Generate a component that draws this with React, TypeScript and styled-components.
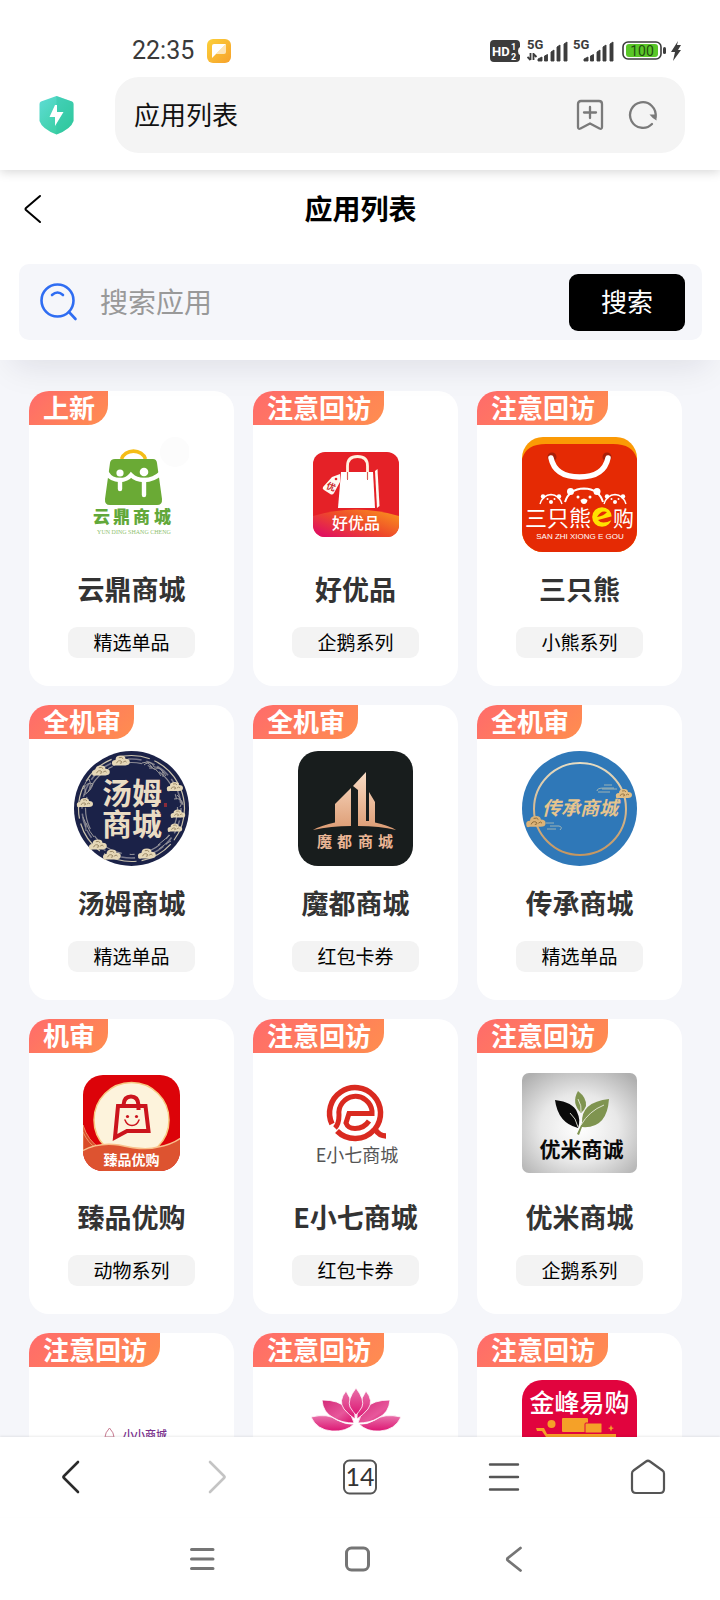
import React from "react";
import styled, { createGlobalStyle } from "styled-components";

const cjk = '"Noto Sans CJK SC", "Noto Sans", sans-serif';

const GlobalStyle = createGlobalStyle`
  *, *::before, *::after { box-sizing: border-box; }
  body { margin: 0; background: #fff; font-family: ${cjk}; color: #000; }
  button, input { font: inherit; color: inherit; margin: 0; }
  svg { display: block; flex: none; }
  svg text { font-family: ${cjk}; }
`;

const Screen = styled.div`
  display: flex;
  flex-direction: column;
  height: 100vh;
  overflow: hidden;
`;

/* ---------- phone status bar ---------- */

const StatusBar = styled.div`
  position: relative;
  z-index: 3;
  display: flex;
  align-items: center;
  justify-content: space-between;
  flex: none;
  height: 77px;
  padding: 24px 38px 0 132px;
  background: #fff;
`;

const StatusGroup = styled.div<{ $gap: number }>`
  display: flex;
  align-items: center;
  gap: ${(p) => p.$gap}px;
`;

const Clock = styled.time`
  font-family: Roboto, sans-serif;
  font-size: 25px;
  line-height: 32px;
  color: #3a3a3a;
`;

/* ---------- browser bar ---------- */

const BrowserBar = styled.header`
  position: relative;
  z-index: 2;
  display: flex;
  align-items: center;
  flex: none;
  gap: 40px;
  padding: 0 35px 17px 38px;
  background: #fff;
  box-shadow: 0 2px 10px rgba(0, 0, 0, 0.16);
`;

const AddressPill = styled.div`
  display: flex;
  align-items: center;
  flex: 1;
  gap: 21px;
  height: 76px;
  padding: 0 26px 0 19px;
  border-radius: 24px;
  background: #f4f4f4;
`;

const AddressInput = styled.input`
  flex: 1;
  min-width: 0;
  padding: 0 0 2px;
  border: 0;
  outline: 0;
  background: transparent;
  font-size: 26px;
  line-height: 40px;
  color: #111;
`;

const IconButton = styled.button`
  display: flex;
  align-items: center;
  justify-content: center;
  padding: 0;
  border: 0;
  background: transparent;
`;

/* ---------- page header ---------- */

const PageHeader = styled.section`
  position: relative;
  z-index: 1;
  flex: none;
  padding: 0 18px 20px 19px;
  background: #fff;
  box-shadow: 0 18px 32px -12px rgba(20, 20, 50, 0.1);
`;

const TitleRow = styled.div`
  display: grid;
  grid-template-columns: 27px 1fr 27px;
  align-items: center;
  height: 78px;
  margin-bottom: 16px;
`;

const Title = styled.h1`
  margin: 0;
  padding-bottom: 2px;
  font-size: 28px;
  line-height: 40px;
  font-weight: 600;
  text-align: center;
`;

const SearchBox = styled.form`
  display: flex;
  align-items: center;
  gap: 21px;
  height: 76px;
  padding: 0 17px 0 20px;
  border-radius: 10px;
  background: #f5f6fa;
`;

const SearchInput = styled.input`
  flex: 1;
  min-width: 0;
  padding: 0 0 2px;
  border: 0;
  outline: 0;
  background: transparent;
  font-size: 28px;
  line-height: 40px;

  &::placeholder {
    color: #999;
    opacity: 1;
  }
`;

const SearchButton = styled.button`
  width: 116px;
  height: 57px;
  padding: 0 0 2px;
  border: 0;
  border-radius: 9px;
  background: #000;
  color: #fff;
  font-size: 26px;
  line-height: 40px;
`;

/* ---------- app grid ---------- */

const Content = styled.main`
  flex: 1;
  min-height: 0;
  overflow: hidden;
  padding: 31px 38px 0 29px;
  background: #f5f6fa;
`;

const Grid = styled.div`
  display: grid;
  grid-template-columns: repeat(3, minmax(0, 1fr));
  gap: 19px;
`;

const Card = styled.a`
  position: relative;
  display: flex;
  flex-direction: column;
  align-items: center;
  padding: 46px 0 28px;
  border-radius: 20px;
  background: #fff;
  color: inherit;
  text-decoration: none;
`;

const Ribbon = styled.span`
  position: absolute;
  top: 0;
  left: 0;
  padding: 0 13px 2px 14px;
  border-radius: 20px 0 20px 0;
  background: linear-gradient(135deg, #ff6b6b, #ff8e4f);
  color: #fff;
  font-size: 26px;
  line-height: 32px;
  font-weight: 700;
  white-space: nowrap;
`;

const AppName = styled.h2`
  margin: 17px 0 18px;
  color: #333;
  font-size: 27px;
  line-height: 40px;
  font-weight: 700;
  white-space: nowrap;
`;

const Series = styled.span`
  width: 127px;
  padding-bottom: 2px;
  border-radius: 9px;
  background: #f3f3f3;
  font-size: 19px;
  line-height: 29px;
  text-align: center;
`;

/* ---------- bottom bars ---------- */

const BrowserNav = styled.nav`
  position: relative;
  display: grid;
  grid-template-columns: repeat(5, 1fr);
  flex: none;
  height: 80px;
  background: #fff;
  box-shadow: 0 -1px 2px rgba(0, 0, 0, 0.08);
`;

const SystemNav = styled.nav`
  display: flex;
  align-items: center;
  justify-content: center;
  flex: none;
  gap: 128px;
  height: 83px;
  padding-right: 4px;
  background: #fff;
`;

/* ---------- status icons ---------- */

const NotesIcon = () => (
  <svg width="24" height="24" viewBox="0 0 24 24" aria-hidden="true">
    <defs>
      <linearGradient id="notes" x1="0" y1="0" x2="1" y2="1">
        <stop offset="0" stopColor="#fbd03a" />
        <stop offset="1" stopColor="#f7a12b" />
      </linearGradient>
    </defs>
    <rect width="24" height="24" rx="6" fill="url(#notes)" />
    <path d="M5 7Q5 5 7 5H19L5 19Z" fill="#fff" />
    <path d="M19 5V13Q19 15 17 15H9Z" fill="#fff" opacity=".65" />
  </svg>
);

const HdIcon = () => (
  <svg width="33" height="24" viewBox="0 0 33 24" aria-hidden="true">
    <path
      d="M4 1H26Q30 1 30 5V8Q28 9 28 12Q28 15 30 16V19Q30 23 26 23H4Q0 23 0 19V5Q0 1 4 1Z"
      fill="#3c3c3c"
    />
    <text x="2" y="17" fontSize="13" fontWeight="700" fill="#fff" style={{ fontFamily: "Roboto" }}>HD</text>
    <text x="21" y="11" fontSize="9" fontWeight="700" fill="#fff" style={{ fontFamily: "Roboto" }}>1</text>
    <text x="21" y="21" fontSize="9" fontWeight="700" fill="#fff" style={{ fontFamily: "Roboto" }}>2</text>
  </svg>
);

const SignalIcon = ({ arrows }: { arrows?: boolean }) => (
  <svg width="42" height="24" viewBox="0 0 42 24" aria-hidden="true">
    <text x="0" y="10" fontSize="13" fontWeight="700" fill="#3c3c3c" style={{ fontFamily: "Roboto" }}>5G</text>
    {arrows && (
      <path d="M3.500 14v7M.5 18l3 3M6.500 21v-7M6.500 15l3 3" stroke="#3c3c3c" strokeWidth="1.800" fill="none" />
    )}
    <path
      d="M11 20l4-2v4h-4zM17.500 17l3-1.500v6.500h-3zM24 13l3-2v11h-3zM30 8l3-2v16h-3zM37 5l3-2v19h-3z"
      fill="#3c3c3c"
      stroke="#3c3c3c"
      strokeWidth=".9"
      strokeLinejoin="round"
    />
  </svg>
);

const BatteryIcon = () => (
  <svg width="47" height="24" viewBox="-3 0 47 24" aria-hidden="true">
    <rect x="1" y="3" width="38" height="17" rx="5" fill="#fff" stroke="#3c3c3c" strokeWidth="1.600" />
    <rect x="4" y="5" width="32" height="13" rx="3" fill="#5ac728" />
    <rect x="41" y="8" width="3" height="7" rx="1.500" fill="#3c3c3c" />
    <text x="20" y="17" fontSize="14" fontWeight="400" textAnchor="middle" fill="#234d12" style={{ fontFamily: "Roboto" }}>100</text>
  </svg>
);

const ChargeIcon = () => (
  <svg width="12" height="24" viewBox="0 0 12 24" aria-hidden="true">
    <path d="M8 2L1 13h4l-2 9 8-11H8l3-5H7z" fill="#3c3c3c" />
  </svg>
);

/* ---------- toolbar icons ---------- */

const ShieldIcon = () => (
  <svg width="37" height="40" viewBox="0 0 37 40" aria-hidden="true">
    <defs>
      <linearGradient id="shield" x1="0" y1="0" x2="1" y2="1">
        <stop offset="0" stopColor="#5fdcd6" />
        <stop offset="1" stopColor="#2fcb93" />
      </linearGradient>
    </defs>
    <path d="M18.500 1L34 6.500Q35.500 7 35.500 9V26Q33 34 18.500 39.500Q4 34 1.500 26V9Q1.500 7 3 6.500Z" fill="url(#shield)" />
    <path d="M18.500 1L34 6.500Q35.500 7 35.500 9V26Q33 34 18.500 39.500Z" fill="#2cc4a4" opacity=".4" />
    <path d="M17 10L11.500 22H17V31L25.500 17H19V10Z" fill="#fff" />
  </svg>
);

const BookmarkIcon = () => (
  <svg width="32" height="32" viewBox="0 0 32 32" fill="none" stroke="#7a7a7a" strokeWidth="2.300" strokeLinecap="round" strokeLinejoin="round" aria-hidden="true">
    <path d="M7 2H25Q28 2 28 5V28Q28 30.500 25.500 29.500L16 24.500L6.500 29.500Q4 30.500 4 28V5Q4 2 7 2Z" />
    <path d="M16 8v11M10 13.500h12" />
  </svg>
);

const ReloadIcon = () => (
  <svg width="32" height="32" viewBox="0 0 32 32" aria-hidden="true">
    <path d="M25 25A12.800 12.800 0 1 1 28.500 18" fill="none" stroke="#7a7a7a" strokeWidth="2.300" strokeLinecap="round" />
    <path d="M22.500 15.500H29.500V21.500Q26 20 22.500 15.500Z" fill="#7a7a7a" />
  </svg>
);

const ChevronLeft = ({ w, h, color, stroke }: { w: number; h: number; color: string; stroke: number }) => (
  <svg width={w} height={h} viewBox={`0 0 ${w} ${h}`} fill="none" stroke={color} strokeWidth={stroke} strokeLinecap="round" strokeLinejoin="round" aria-hidden="true">
    <path d={`M17 2L3 ${h / 2 - 1}Q2 ${h / 2} 3 ${h / 2 + 1}L17 ${h - 2}`} />
  </svg>
);

const ForwardIcon = () => (
  <svg width="22" height="34" viewBox="0 0 22 34" fill="none" stroke="#c4c4c4" strokeWidth="2.600" strokeLinecap="round" strokeLinejoin="round" aria-hidden="true">
    <path d="M5 2L19 16Q20 17 19 18L5 32" />
  </svg>
);

const SearchIcon = () => (
  <svg width="40" height="40" viewBox="0 0 40 40" fill="none" stroke="#2f6df2" strokeWidth="2.600" strokeLinecap="round" aria-hidden="true">
    <circle cx="18.500" cy="18.500" r="16" />
    <path d="M13 13Q18.500 8 24 13M30 30L36.500 37" />
  </svg>
);

const TabsIcon = () => (
  <svg width="36" height="36" viewBox="0 0 36 36" aria-hidden="true">
    <rect x="2" y="1.500" width="32" height="33" rx="5.500" fill="none" stroke="#555" strokeWidth="2" />
    <text x="18" y="27" fontSize="25" textAnchor="middle" fill="#333" style={{ fontFamily: "Lato" }}>14</text>
  </svg>
);

const MenuIcon = () => (
  <svg width="32" height="32" viewBox="0 0 32 32" stroke="#555" strokeWidth="2.400" strokeLinecap="round" aria-hidden="true">
    <path d="M2 3.500H30M2 16H30M2 28.500H30" />
  </svg>
);

const HomeIcon = () => (
  <svg width="36" height="36" viewBox="0 0 36 36" fill="none" stroke="#555" strokeWidth="2.200" strokeLinejoin="round" aria-hidden="true">
    <path d="M16 2.500Q18 1 20 2.500L32.500 11.500Q34 12.500 34 14.500V30Q34 34 30 34H6Q2 34 2 30V14.500Q2 12.500 3.500 11.500Z" />
  </svg>
);

const RecentsIcon = () => (
  <svg width="28" height="28" viewBox="0 0 28 28" stroke="#757575" strokeWidth="3" strokeLinecap="round" aria-hidden="true">
    <path d="M3.500 4.500H25M3.500 14H25M3.500 23.500H25" />
  </svg>
);

const SystemHomeIcon = () => (
  <svg width="28" height="28" viewBox="0 0 28 28" aria-hidden="true">
    <rect x="2.500" y="3" width="22" height="22" rx="5" fill="none" stroke="#757575" strokeWidth="3" />
  </svg>
);

const SystemBackIcon = () => (
  <svg width="28" height="28" viewBox="0 0 28 28" fill="none" stroke="#757575" strokeWidth="2.800" strokeLinecap="round" strokeLinejoin="round" aria-hidden="true">
    <path d="M20.500 3L8 13Q6.500 14 8 15.500L20.500 25.500" />
  </svg>
);

/* ---------- shop logos, all on a 115 x 115 board ---------- */

const Board = ({ children }: { children: React.ReactNode }) => (
  <svg width="115" height="115" viewBox="0 0 115 115" aria-hidden="true">{children}</svg>
);

const YundingLogo = () => (
  <Board>
    <circle cx="101" cy="15" r="15" fill="#fcfcfc" />
    <path d="M47.500 22A12.500 11 0 0 1 71.500 22" fill="none" stroke="#f5bd17" strokeWidth="3.600" />
    <path d="M41 22H79Q82.500 22 83 26L88 62Q88.500 68 83 68H36Q30.500 68 31 62L36 26Q36.500 22 41 22Z" fill="#6aaa35" />
    <g fill="none" stroke="#fff" strokeWidth="4.400" strokeLinecap="round">
      <path d="M33 36Q37 43 46 43Q53 43 57 38Q62 43 70 43Q80 43 87 36" />
      <path d="M46 43V52M70 43V58" />
    </g>
    <circle cx="46" cy="36" r="3.600" fill="#fff" />
    <circle cx="70" cy="35" r="4.300" fill="#fff" />
    <text x="19 39 59 80" y="86" fontSize="17" fontWeight="900" fill="#62a83a">云鼎商城</text>
    <text x="60" y="97" fontSize="6" textAnchor="middle" fill="#8fbf70" style={{ fontFamily: '"Liberation Serif"' }}>YUN DING SHANG CHENG</text>
  </Board>
);

const HaoyoupinLogo = () => (
  <Board>
    <defs>
      <linearGradient id="hyp" x1="0" y1="0.800" x2="1" y2="0">
        <stop offset="0" stopColor="#e0115f" />
        <stop offset=".45" stopColor="#ee4a2a" />
        <stop offset="1" stopColor="#fb9a1c" />
      </linearGradient>
      <clipPath id="hypClip"><rect x="15" y="15" width="86" height="85" rx="12" /></clipPath>
    </defs>
    <g clipPath="url(#hypClip)">
      <rect x="15" y="15" width="86" height="85" fill="#e52127" />
      <path d="M15 79Q58 66 101 79V100H15Z" fill="url(#hyp)" />
    </g>
    <path d="M43 35H75L77 71H40Z" fill="#fff" />
    <path d="M77 34L79.500 32L81.500 69L79 71Z" fill="#fffaf2" />
    <path d="M49.500 42V29Q49.500 19.500 59.500 19.500Q69.500 19.500 69.500 29V42" fill="none" stroke="#fff3e0" strokeWidth="2.800" />
    <path d="M49.500 35V43M69.500 35V43" stroke="#d9575b" strokeWidth="1" />
    <path d="M42 37L34 40L25 50Q24 52 26 53L33 57.500Q35 58 36 56L42 45Z" fill="#fffaf2" />
    <circle cx="38" cy="42" r="1.300" fill="#e52127" />
    <text x="33" y="53" fontSize="9" fontWeight="700" textAnchor="middle" fill="#c8242b" transform="rotate(20 33 50)">优</text>
    <text x="58" y="92" fontSize="16" fontWeight="500" textAnchor="middle" fill="#fff">好优品</text>
  </Board>
);

const SmallBear = ({ x }: { x: number }) => (
  <g transform={`translate(${x} 62)`}>
    <path d="M-11 5Q-8 -4 0 -4.500Q8 -4 11 5" fill="none" stroke="#fff" strokeWidth="1.400" />
    <circle cx="-8" cy="-2.500" r="2.200" fill="#fff" />
    <circle cx="8" cy="-2.500" r="2.200" fill="#fff" />
    <circle cx="-3.500" cy="0" r="1" fill="#fff" />
    <circle cx="3.500" cy="0" r="1" fill="#fff" />
    <ellipse cx="0" cy="3" rx="2" ry="2" fill="#fff" />
  </g>
);

const ThreeBearsLogo = () => (
  <Board>
    <clipPath id="bears"><rect width="115" height="115" rx="21" /></clipPath>
    <g clipPath="url(#bears)">
      <rect width="115" height="115" fill="#fb9a05" />
      <path d="M0 22Q4 7 24 7H91Q111 7 115 22V115H0Z" fill="#e52a04" />
    </g>
    <circle cx="30" cy="20" r="4.500" fill="#a81f08" />
    <circle cx="85" cy="20" r="4.500" fill="#a81f08" />
    <path d="M29 21Q33 40 57.500 40Q82 40 86 21" fill="none" stroke="#fff" strokeWidth="5.500" strokeLinecap="round" />
    <path d="M43 65Q47 52 62 51.500Q77 52 81 65" fill="none" stroke="#fff" strokeWidth="2" />
    <circle cx="48.500" cy="54.500" r="3.500" fill="#fff" />
    <circle cx="75" cy="54.500" r="3.500" fill="#fff" />
    <circle cx="56" cy="60" r="1.500" fill="#fff" />
    <circle cx="68" cy="60" r="1.500" fill="#fff" />
    <path d="M58.500 63Q62 60 65.500 63Q65 67 62 67Q59 67 58.500 63Z" fill="#fff" />
    <SmallBear x={29} />
    <SmallBear x={93} />
    <text x="3" y="89" fontSize="22" fontWeight="400" fill="#fff">三只熊</text>
    <circle cx="80" cy="80" r="9.800" fill="#ffe100" />
    <path d="M75 80Q82 79 85 75Q79 72.500 75 80ZM91 79L76 83Q80 88 90 83Z" fill="#e52a04" />
    <text x="91" y="89" fontSize="21" fontWeight="400" fill="#fff">购</text>
    <text x="58" y="102" fontSize="8" textAnchor="middle" fill="#fff" style={{ fontFamily: '"Liberation Sans"' }}>SAN ZHI XIONG E GOU</text>
  </Board>
);

const CloudPuff = ({ x, y, s = 1, fill = "#e6d8b8", line = "#8f7c5a" }: { x: number; y: number; s?: number; fill?: string; line?: string }) => (
  <g transform={`translate(${x} ${y}) scale(${s})`}>
    <path d="M-8 3Q-9 -1 -5 -1Q-5 -5 0 -5Q4 -5 4 -2Q8 -2 8 1Q8 4 4 4H-5Q-8 5 -8 3Z" fill={fill} />
    <path d="M-4 2Q-3 -1 0 0Q2 2 -1 2M2 1Q4 -1 5 1M-2 -3Q1 -4 2 -2" fill="none" stroke={line} strokeWidth=".8" />
  </g>
);

const TangmuLogo = () => (
  <Board>
    <circle cx="57.500" cy="57.500" r="57.500" fill="#1b2248" />
    <circle cx="57.500" cy="57.500" r="53" fill="none" stroke="#c9c1ac" strokeWidth="1.200" strokeDasharray="34 5" />
    <circle cx="57.500" cy="57.500" r="49.500" fill="none" stroke="#77778a" strokeWidth="1.600" strokeDasharray="9 3 14 5" />
    <circle cx="57.500" cy="57.500" r="46" fill="none" stroke="#8b8a94" strokeWidth="1.200" strokeDasharray="22 6 5 8" />
    <g fill="none" stroke="#9c9a9c" strokeWidth="1">
      <path d="M68 12Q78 9 80 16Q86 15 92 25M75 17Q82 16 87 25M12 42Q8 32 15 28Q18 34 14 41M100 48Q108 46 109 54M85 98Q92 92 97 90M12 72Q16 82 20 86M84 94L96 84" />
      <path d="M70 14Q74 10 77 15Q80 20 84 17Q90 19 89 26M9 38Q14 30 19 33Q17 40 10 44M103 44Q110 50 106 56M9 66Q13 72 12 80" />
    </g>
    <CloudPuff x={47} y={10} s={1.1} />
    <CloudPuff x={27} y={20} s={1.1} />
    <CloudPuff x={11} y={52} />
    <CloudPuff x={101} y={36} />
    <CloudPuff x={104} y={63} s={0.9} />
    <CloudPuff x={101} y={77} s={0.9} />
    <CloudPuff x={73} y={103} s={1.1} />
    <CloudPuff x={38} y={104} s={1.1} />
    <CloudPuff x={24} y={94} s={1.1} />
    <text x="58" y="53" fontSize="30" fontWeight="600" textAnchor="middle" fill="#eadcc4">汤姆</text>
    <text x="58" y="84" fontSize="30" fontWeight="600" textAnchor="middle" fill="#eadcc4">商城</text>
    <rect x="90" y="52" width="3" height="4" fill="#8a2b3a" />
  </Board>
);

const ModuLogo = () => (
  <Board>
    <defs>
      <linearGradient id="modu" x1="0" y1="0" x2="0" y2="1">
        <stop offset="0" stopColor="#f9dcc5" />
        <stop offset="1" stopColor="#dd9c74" />
      </linearGradient>
    </defs>
    <rect width="115" height="115" rx="20" fill="#181d1d" />
    <path
      d="M37 53L53 37V75Q33 75 15 79Q24 74 37 71.500ZM55 35L68 21V70H71V41L77 51V71.500Q90 74 98 79Q82 75 60 75V39Z"
      fill="url(#modu)"
    />
    <text x="19 39 60 80" y="96" fontSize="15" fontWeight="700" fill="#eab595">魔都商城</text>
  </Board>
);

const ChuanchengLogo = () => (
  <Board>
    <defs>
      <linearGradient id="ccRing" x1="0" y1="0" x2="0" y2="1">
        <stop offset="0" stopColor="#e6dcc2" />
        <stop offset="1" stopColor="#c59660" />
      </linearGradient>
    </defs>
    <circle cx="57.500" cy="57.500" r="57.500" fill="#2f78b8" />
    <circle cx="58" cy="58" r="46" fill="none" stroke="url(#ccRing)" strokeWidth="2" />
    <g fill="none" stroke="#b9c2b4" strokeWidth=".8">
      <path d="M75 40Q75 37 82 37H92M82 34H90M76 41H88M80 38H95M28 75H37Q41 76 38 79M25 78H34M24 72H32" />
    </g>
    <CloudPuff x={102} y={43} s={1} fill="#e2bf85" line="#8a6a3a" />
    <CloudPuff x={14} y={71} s={1.2} fill="#dcb377" line="#8a6a3a" />
    <text x="58" y="64" fontSize="19" fontWeight="600" fontStyle="italic" textAnchor="middle" fill="#e6c48e">传承商城</text>
  </Board>
);

const ZhenpinLogo = () => (
  <Board>
    <clipPath id="zp"><rect x="9" y="10" width="97" height="96" rx="20" /></clipPath>
    <g clipPath="url(#zp)">
      <rect x="9" y="10" width="97" height="96" fill="#dc0309" />
      <circle cx="57.500" cy="55" r="37.500" fill="#fdf3dc" stroke="#f7c981" strokeWidth="1.500" />
      <path d="M9 60Q14 76 26 83L9 88Z" fill="#d94a26" stroke="#f5a878" strokeWidth=".8" />
      <path d="M9 67Q14 78 22 83" fill="none" stroke="#f5a878" strokeWidth=".8" />
      <path d="M8 86Q24 77 45 80Q70 86 84 82Q97 80 107 73V107H8Z" fill="#dd5330" stroke="#f9c08c" strokeWidth="1.400" />
    </g>
    <g fill="none" stroke="#cb141d" strokeWidth="4">
      <path d="M44 41H71.500L74.500 66H53L41 72.500Z" />
      <path d="M49.500 40Q50 31.500 57 31.500Q64 31.500 64.500 40V45" />
    </g>
    <circle cx="53.500" cy="51.500" r="1.600" fill="#cb141d" />
    <circle cx="62.500" cy="51.500" r="1.600" fill="#cb141d" />
    <path d="M51 55Q53 60.500 58 60.500Q63 60.500 65 55" fill="none" stroke="#cb141d" strokeWidth="1.500" strokeLinecap="round" />
    <text x="57.500" y="100" fontSize="14" fontWeight="700" textAnchor="middle" fill="#fff">臻品优购</text>
  </Board>
);

const ExiaoqiLogo = () => (
  <Board>
    <g fill="none" stroke="#d92a20">
      <path d="M34 59A25.500 25.500 0 1 1 77 64Q81 71 88 71" strokeWidth="5.500" />
      <path d="M39 66A25.500 25.500 0 0 0 76 65" strokeWidth="5.500" />
      <path d="M37 63Q41 59 41 50A16.500 16.500 0 0 1 74 46V48.500H51L48 58Q50 63.500 57 63.500Q66 63.500 71 56" strokeWidth="5" />
    </g>
    <text x="59" y="97" fontSize="18" fontWeight="400" textAnchor="middle" fill="#555">E小七商城</text>
  </Board>
);

const YoumiLogo = () => (
  <Board>
    <defs>
      <radialGradient id="ym" cx=".5" cy=".55" r=".68">
        <stop offset="0" stopColor="#fff" />
        <stop offset=".5" stopColor="#e8e8e8" />
        <stop offset="1" stopColor="#b0b0b0" />
      </radialGradient>
    </defs>
    <rect y="8" width="115" height="100" rx="7" fill="url(#ym)" />
    <path d="M33 35Q51 37 55 47Q59 55 56 63Q36 58 33 35Z" fill="#0a0a0a" />
    <path d="M56 26Q65 33 64 41Q62 46 59 48Q49 38 56 26Z" fill="#7f9450" />
    <path d="M87 34Q85 64 60 62L57 70L55 69L60 58Q59 37 87 34Z" fill="#7f9450" />
    <path d="M48 48Q54 53 56 62M82 40Q67 46 59 60M56 34Q60 41 59 47" fill="none" stroke="#e9ecdf" strokeWidth=".9" />
    <text x="59.500" y="92" fontSize="21" fontWeight="600" textAnchor="middle" fill="#0a0a0a">优米商诚</text>
  </Board>
);

const XiaoxiaoLogo = () => (
  <Board>
    <path d="M35.500 49Q31 54 31 58H40Q40 54 35.500 49Z" fill="none" stroke="#c77a90" strokeWidth="1" />
    <text x="49" y="60" fontSize="11" fontWeight="500" fill="#7a2f8c">小小商城</text>
  </Board>
);

const LotusLogo = () => (
  <Board>
    <defs>
      <linearGradient id="lotus" x1="0" y1="0" x2="0" y2="1">
        <stop offset="0" stopColor="#e873ab" />
        <stop offset="1" stopColor="#dd1673" />
      </linearGradient>
      <linearGradient id="lotusSide" x1="0" y1="0" x2="1" y2="1">
        <stop offset="0" stopColor="#d42a78" />
        <stop offset=".6" stopColor="#e7579b" />
        <stop offset="1" stopColor="#d90f6c" />
      </linearGradient>
    </defs>
    <g stroke="#fff" strokeWidth=".8">
      <path d="M13 38Q30 34 39 41Q48 46 56 45Q48 53 34 52Q19 51 13 38Z" fill="url(#lotus)" />
      <path d="M103 38Q86 34 77 41Q69 46 61 45Q69 53 82 52Q97 51 103 38Z" fill="url(#lotus)" />
      <path d="M24 21Q41 21 48 29Q54 36 56 44Q44 44 36 39Q25 34 24 21Z" fill="url(#lotusSide)" />
      <path d="M92 21Q75 21 68 29Q62 36 60 44Q72 44 80 39Q91 34 92 21Z" fill="url(#lotusSide)" />
      <path d="M48 12Q40 22 46 30Q51 36 57 40Q58 32 54 26Q52 18 48 12Z" fill="url(#lotus)" />
      <path d="M68 12Q76 22 70 30Q65 36 59 40Q58 32 62 26Q64 18 68 12Z" fill="url(#lotus)" />
      <path d="M58 9Q67 21 64 28Q61 33 58 36Q55 33 52 28Q49 21 58 9Z" fill="url(#lotus)" />
    </g>
  </Board>
);

const JinfengLogo = () => (
  <Board>
    <rect width="115" height="115" rx="20" y="1" fill="#e1043e" />
    <text x="57.500" y="33" fontSize="25" fontWeight="500" textAnchor="middle" fill="#fff">金峰易购</text>
    <g fill="#f5a128">
      <rect x="40" y="39" width="26" height="14" rx="1" />
      <rect x="63" y="44" width="17" height="10" rx="1" stroke="#e1043e" />
      <circle cx="29.500" cy="45" r="4" />
      <path d="M89 46L90 48.500L92 49L90 50L89 52.500L88 50L86 49L88 48.500Z" />
      <path d="M14 49H22L25 55H94V58H24L20 52H15Z" />
    </g>
  </Board>
);

/* ---------- data ---------- */

type Shop = { name: string; badge: string; series: string; logo: React.ReactNode };

const shops: Shop[] = [
  { name: "云鼎商城", badge: "上新", series: "精选单品", logo: <YundingLogo /> },
  { name: "好优品", badge: "注意回访", series: "企鹅系列", logo: <HaoyoupinLogo /> },
  { name: "三只熊", badge: "注意回访", series: "小熊系列", logo: <ThreeBearsLogo /> },
  { name: "汤姆商城", badge: "全机审", series: "精选单品", logo: <TangmuLogo /> },
  { name: "魔都商城", badge: "全机审", series: "红包卡券", logo: <ModuLogo /> },
  { name: "传承商城", badge: "全机审", series: "精选单品", logo: <ChuanchengLogo /> },
  { name: "臻品优购", badge: "机审", series: "动物系列", logo: <ZhenpinLogo /> },
  { name: "E小七商城", badge: "注意回访", series: "红包卡券", logo: <ExiaoqiLogo /> },
  { name: "优米商城", badge: "注意回访", series: "企鹅系列", logo: <YoumiLogo /> },
  { name: "小小商城", badge: "注意回访", series: "精选单品", logo: <XiaoxiaoLogo /> },
  { name: "莲花商城", badge: "注意回访", series: "精选单品", logo: <LotusLogo /> },
  { name: "金峰易购", badge: "注意回访", series: "精选单品", logo: <JinfengLogo /> },
];

export default function App() {
  return (
    <>
      <GlobalStyle />
      <Screen>
        <StatusBar>
          <StatusGroup $gap={13}>
            <Clock>22:35</Clock>
            <NotesIcon />
          </StatusGroup>
          <StatusGroup $gap={4}>
            <HdIcon />
            <SignalIcon arrows />
            <SignalIcon />
            <BatteryIcon />
            <ChargeIcon />
          </StatusGroup>
        </StatusBar>

        <BrowserBar>
          <IconButton type="button" aria-label="安全"><ShieldIcon /></IconButton>
          <AddressPill>
            <AddressInput aria-label="地址" defaultValue="应用列表" />
            <IconButton type="button" aria-label="收藏"><BookmarkIcon /></IconButton>
            <IconButton type="button" aria-label="刷新"><ReloadIcon /></IconButton>
          </AddressPill>
        </BrowserBar>

        <PageHeader>
          <TitleRow>
            <IconButton type="button" aria-label="返回">
              <ChevronLeft w={19} h={30} color="#000" stroke={2} />
            </IconButton>
            <Title>应用列表</Title>
          </TitleRow>
          <SearchBox onSubmit={(e) => e.preventDefault()}>
            <SearchIcon />
            <SearchInput type="text" aria-label="搜索应用" placeholder="搜索应用" />
            <SearchButton type="submit">搜索</SearchButton>
          </SearchBox>
        </PageHeader>

        <Content>
          <Grid>
            {shops.map((shop) => (
              <Card href="#" key={shop.name}>
                <Ribbon>{shop.badge}</Ribbon>
                {shop.logo}
                <AppName>{shop.name}</AppName>
                <Series>{shop.series}</Series>
              </Card>
            ))}
          </Grid>
        </Content>

        <BrowserNav aria-label="浏览器">
          <IconButton type="button" aria-label="后退">
            <ChevronLeft w={22} h={34} color="#2b2b2b" stroke={2.6} />
          </IconButton>
          <IconButton type="button" aria-label="前进"><ForwardIcon /></IconButton>
          <IconButton type="button" aria-label="标签页"><TabsIcon /></IconButton>
          <IconButton type="button" aria-label="菜单"><MenuIcon /></IconButton>
          <IconButton type="button" aria-label="主页"><HomeIcon /></IconButton>
        </BrowserNav>

        <SystemNav aria-label="系统">
          <IconButton type="button" aria-label="最近任务"><RecentsIcon /></IconButton>
          <IconButton type="button" aria-label="桌面"><SystemHomeIcon /></IconButton>
          <IconButton type="button" aria-label="系统返回"><SystemBackIcon /></IconButton>
        </SystemNav>
      </Screen>
    </>
  );
}
